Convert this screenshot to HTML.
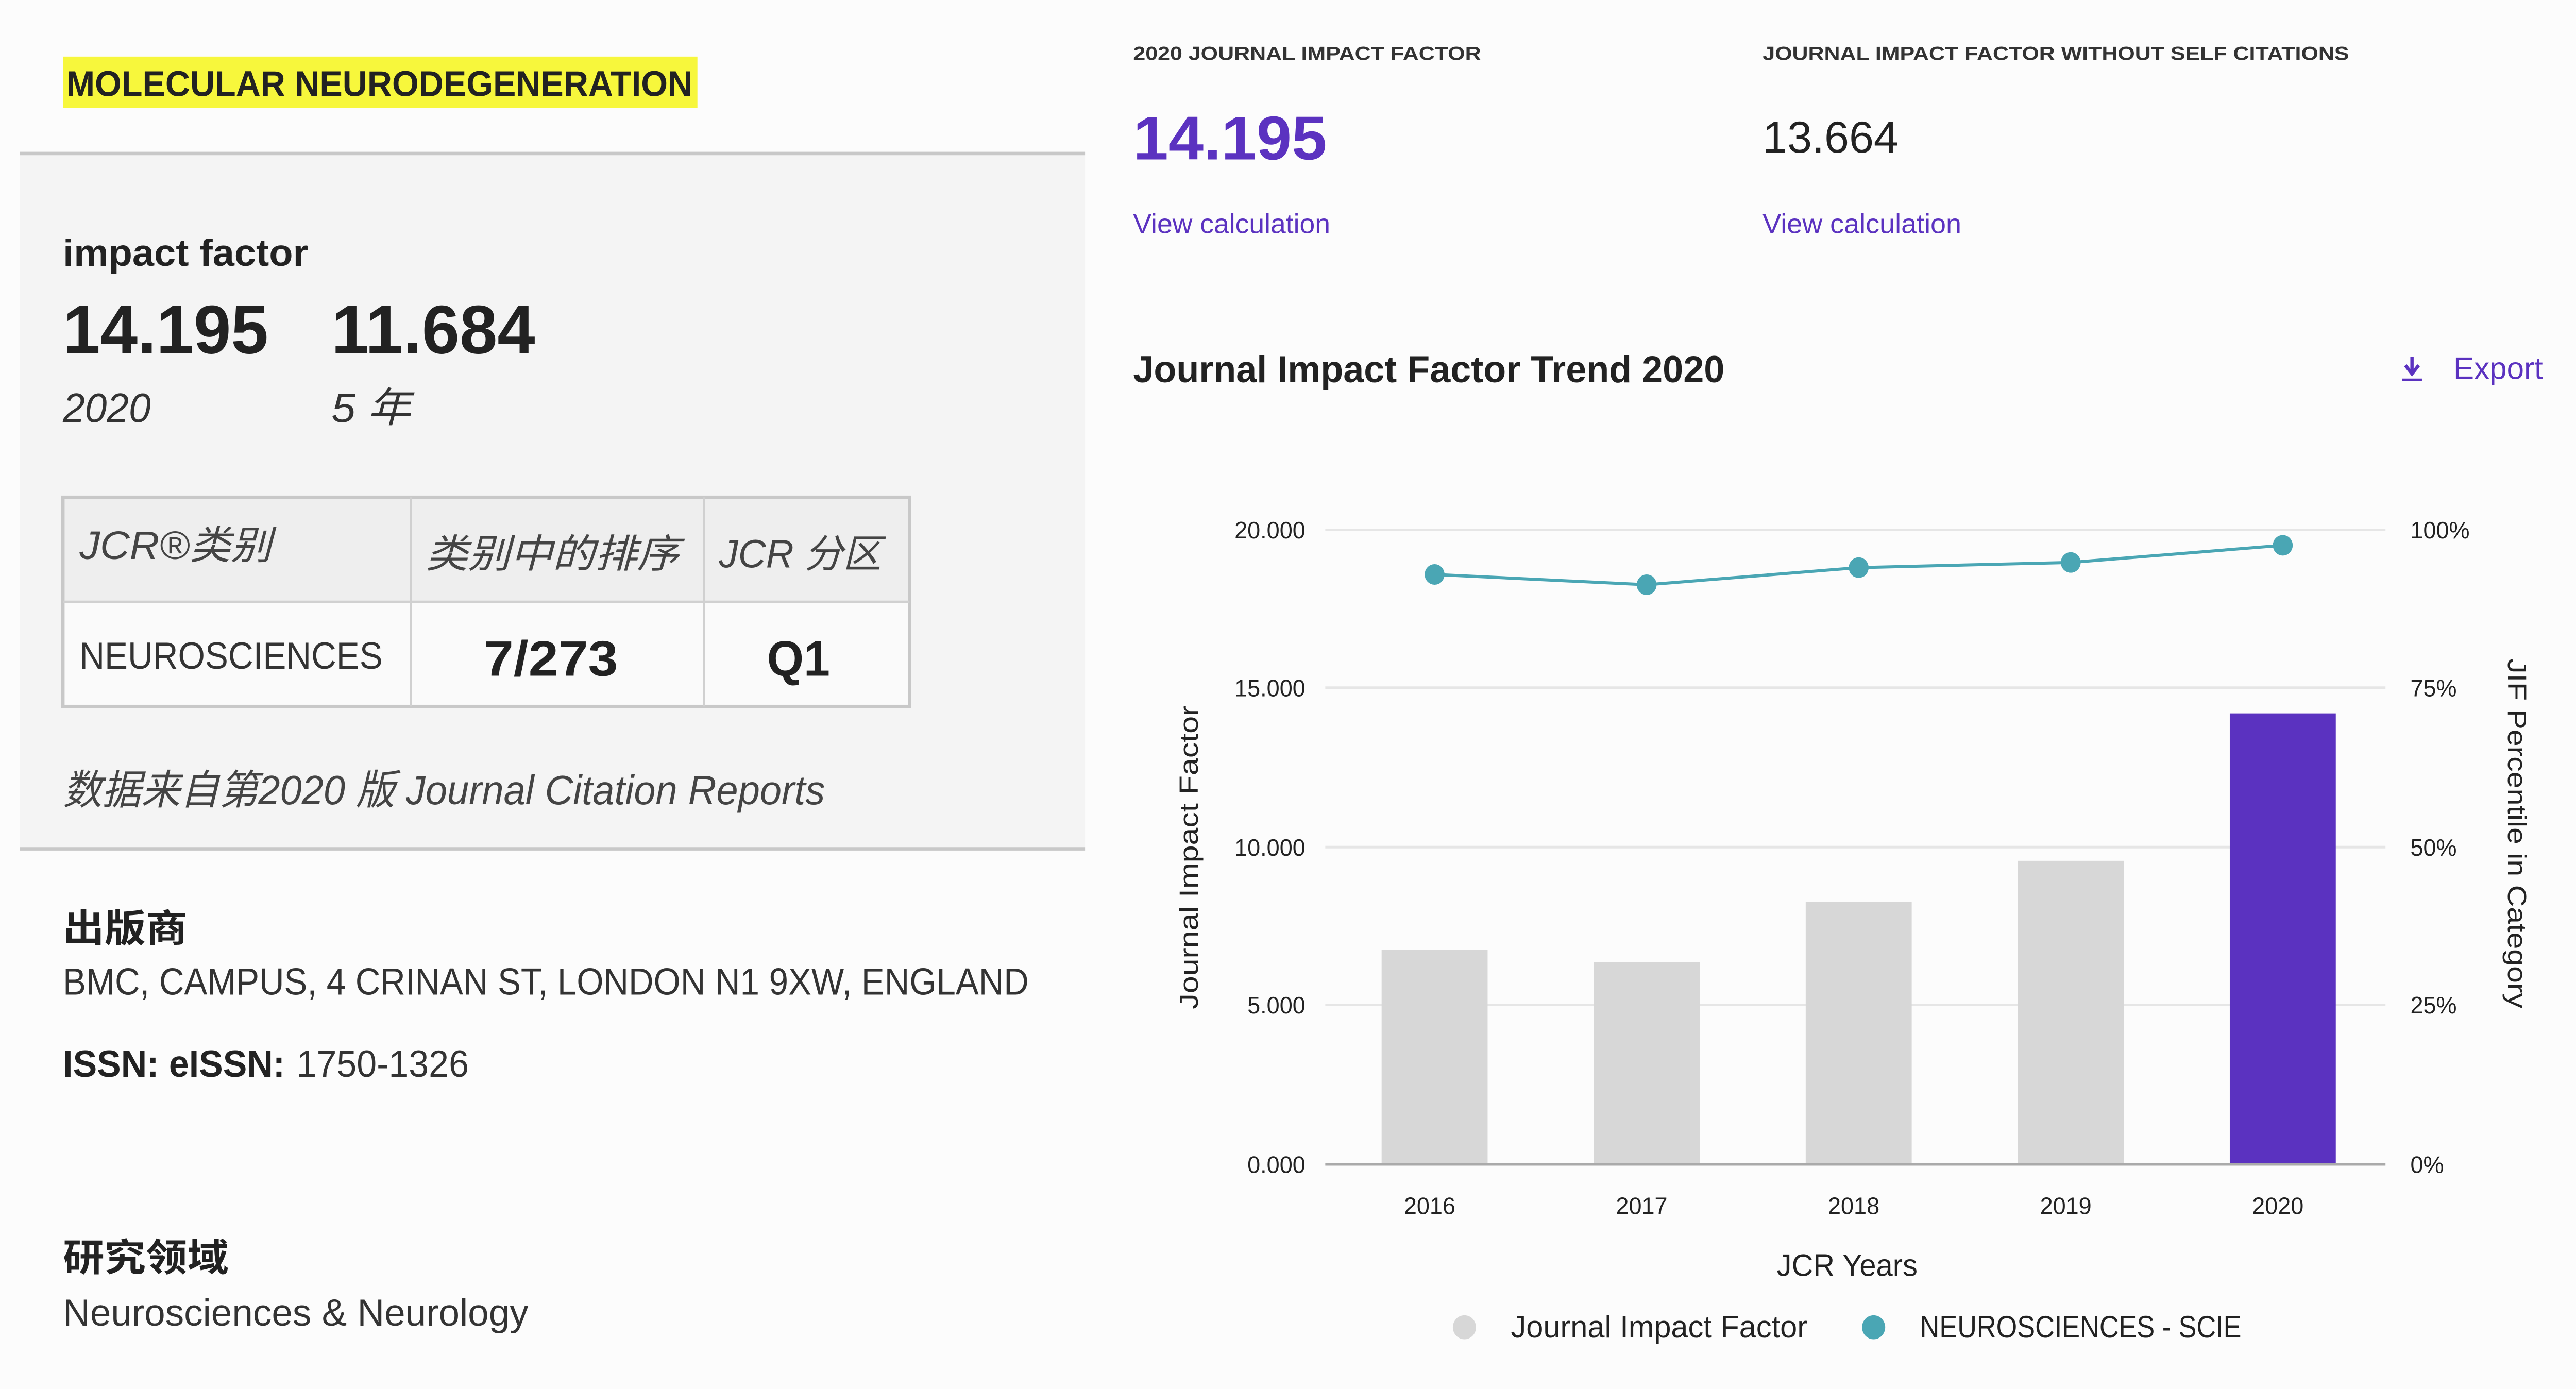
<!DOCTYPE html>
<html><head><meta charset="utf-8"><style>
html,body{margin:0;padding:0;background:#fcfcfc;overflow:hidden;width:100%;height:100%;}
svg{display:block;width:100vw;height:100vh;}
text{font-family:"Liberation Sans","Noto Sans CJK SC",sans-serif;}
</style></head><body>
<svg viewBox="0 0 1555 810" preserveAspectRatio="none" xmlns="http://www.w3.org/2000/svg">
<rect x="0" y="0" width="1555" height="810" fill="#fcfcfc"/>
<rect x="12" y="90" width="643" height="405" fill="#f4f4f4"/>
<line x1="12" y1="89.5" x2="655" y2="89.5" stroke="#c8c8c8" stroke-width="2"/>
<line x1="12" y1="495" x2="655" y2="495" stroke="#c8c8c8" stroke-width="2"/>
<rect x="38" y="33" width="383" height="30" fill="#f7f73c"/>
<text x="40" y="56" font-size="21" font-weight="600" fill="#222" textLength="378" lengthAdjust="spacingAndGlyphs">MOLECULAR NEURODEGENERATION</text>
<text x="38" y="155" font-size="22" font-weight="bold" fill="#222" textLength="148" lengthAdjust="spacingAndGlyphs">impact factor</text>
<text x="38" y="206" font-size="40" font-weight="bold" fill="#222" textLength="124" lengthAdjust="spacingAndGlyphs">14.195</text>
<text x="200" y="206" font-size="40" font-weight="bold" fill="#222" textLength="123" lengthAdjust="spacingAndGlyphs">11.684</text>
<text x="38" y="246" font-size="24" font-style="italic" fill="#333" textLength="53" lengthAdjust="spacingAndGlyphs">2020</text>
<text x="200" y="246" font-size="24" font-style="italic" fill="#333" textLength="48" lengthAdjust="spacingAndGlyphs">5 年</text>
<rect x="38" y="290" width="511" height="61" fill="#eeeeee"/>
<rect x="38" y="351" width="511" height="61" fill="#fafafa"/>
<rect x="38" y="290" width="511" height="122" fill="none" stroke="#c8c8c8" stroke-width="2"/>
<line x1="38" y1="351" x2="549" y2="351" stroke="#d0d0d0" stroke-width="1.5"/>
<line x1="248" y1="290" x2="248" y2="412" stroke="#d0d0d0" stroke-width="1.5"/>
<line x1="425" y1="290" x2="425" y2="412" stroke="#d0d0d0" stroke-width="1.5"/>
<text x="48" y="326" font-size="23" font-style="italic" fill="#444" textLength="116" lengthAdjust="spacingAndGlyphs">JCR®类别</text>
<text x="257" y="331" font-size="23" font-style="italic" fill="#444" textLength="153" lengthAdjust="spacingAndGlyphs">类别中的排序</text>
<text x="434" y="331" font-size="23" font-style="italic" fill="#444" textLength="98" lengthAdjust="spacingAndGlyphs">JCR 分区</text>
<text x="48" y="390" font-size="22" fill="#333" textLength="183" lengthAdjust="spacingAndGlyphs">NEUROSCIENCES</text>
<text x="292" y="394" font-size="29" font-weight="bold" fill="#222" textLength="81" lengthAdjust="spacingAndGlyphs">7/273</text>
<text x="463" y="394" font-size="29" font-weight="bold" fill="#222" textLength="38" lengthAdjust="spacingAndGlyphs">Q1</text>
<text x="38" y="469" font-size="24" font-style="italic" fill="#444" textLength="460" lengthAdjust="spacingAndGlyphs">数据来自第2020 版 Journal Citation Reports</text>
<text x="38" y="549" font-size="22" font-weight="bold" fill="#222" textLength="75" lengthAdjust="spacingAndGlyphs">出版商</text>
<text x="38" y="580" font-size="22" fill="#333" textLength="583" lengthAdjust="spacingAndGlyphs">BMC, CAMPUS, 4 CRINAN ST, LONDON N1 9XW, ENGLAND</text>
<text x="38" y="628" font-size="22" font-weight="bold" fill="#222" textLength="134" lengthAdjust="spacingAndGlyphs">ISSN: eISSN:</text>
<text x="179" y="628" font-size="22" fill="#333" textLength="104" lengthAdjust="spacingAndGlyphs">1750-1326</text>
<text x="38" y="741" font-size="22" font-weight="bold" fill="#222" textLength="100" lengthAdjust="spacingAndGlyphs">研究领域</text>
<text x="38" y="773" font-size="22" fill="#333" textLength="281" lengthAdjust="spacingAndGlyphs">Neurosciences &amp; Neurology</text>
<text x="684" y="35" font-size="11" font-weight="bold" fill="#333" textLength="210" lengthAdjust="spacingAndGlyphs">2020 JOURNAL IMPACT FACTOR</text>
<text x="1064" y="35" font-size="11" font-weight="bold" fill="#333" textLength="354" lengthAdjust="spacingAndGlyphs">JOURNAL IMPACT FACTOR WITHOUT SELF CITATIONS</text>
<text x="684" y="93" font-size="36" font-weight="bold" fill="#5b32c0" textLength="117" lengthAdjust="spacingAndGlyphs">14.195</text>
<text x="1064" y="89" font-size="26" fill="#222" textLength="82" lengthAdjust="spacingAndGlyphs">13.664</text>
<text x="684" y="136" font-size="16" fill="#5b32c0" textLength="119" lengthAdjust="spacingAndGlyphs">View calculation</text>
<text x="1064" y="136" font-size="16" fill="#5b32c0" textLength="120" lengthAdjust="spacingAndGlyphs">View calculation</text>
<text x="684" y="223" font-size="22" font-weight="bold" fill="#222" textLength="357" lengthAdjust="spacingAndGlyphs">Journal Impact Factor Trend 2020</text>
<path d="M1456 208 V217 M1452 213 L1456 218 L1460 213" stroke="#5b32c0" stroke-width="2" fill="none"/>
<line x1="1450" y1="221.5" x2="1462" y2="221.5" stroke="#5b32c0" stroke-width="1.5"/>
<text x="1481" y="221" font-size="18" fill="#5b32c0" textLength="54" lengthAdjust="spacingAndGlyphs">Export</text>
<g stroke="#e6e6e6" stroke-width="1.5">
<line x1="800" y1="309" x2="1440" y2="309"/>
<line x1="800" y1="401" x2="1440" y2="401"/>
<line x1="800" y1="494" x2="1440" y2="494"/>
<line x1="800" y1="586" x2="1440" y2="586"/>
</g>
<g fill="#d7d7d7">
<rect x="834" y="554" width="64" height="125"/>
<rect x="962" y="561" width="64" height="118"/>
<rect x="1090" y="526" width="64" height="153"/>
<rect x="1218" y="502" width="64" height="177"/>
</g>
<rect x="1346" y="416" width="64" height="263" fill="#5b32c0"/>
<line x1="800" y1="679" x2="1440" y2="679" stroke="#aaa" stroke-width="1.5"/>
<polyline points="866,335 994,341 1122,331 1250,328 1378,318" fill="none" stroke="#4aa6b4" stroke-width="1.8"/>
<g fill="#4aa6b4">
<circle cx="866" cy="335" r="6"/><circle cx="994" cy="341" r="6"/><circle cx="1122" cy="331" r="6"/><circle cx="1250" cy="328" r="6"/><circle cx="1378" cy="318" r="6"/>
</g>
<g font-size="14" fill="#222" text-anchor="end">
<text x="788" y="314">20.000</text><text x="788" y="406">15.000</text><text x="788" y="499">10.000</text><text x="788" y="591">5.000</text><text x="788" y="684">0.000</text>
</g>
<g font-size="14" fill="#222">
<text x="1455" y="314">100%</text><text x="1455" y="406">75%</text><text x="1455" y="499">50%</text><text x="1455" y="591">25%</text><text x="1455" y="684">0%</text>
</g>
<g font-size="14" fill="#222" text-anchor="middle">
<text x="863" y="708">2016</text><text x="991" y="708">2017</text><text x="1119" y="708">2018</text><text x="1247" y="708">2019</text><text x="1375" y="708">2020</text>
</g>
<text x="1115" y="744" font-size="18" fill="#222" text-anchor="middle">JCR Years</text>
<text transform="translate(723,500) rotate(-90)" font-size="16" fill="#222" text-anchor="middle" textLength="177" lengthAdjust="spacingAndGlyphs">Journal Impact Factor</text>
<text transform="translate(1514,486) rotate(90)" font-size="16" fill="#222" text-anchor="middle" textLength="204" lengthAdjust="spacingAndGlyphs">JIF Percentile in Category</text>
<circle cx="884" cy="774" r="7" fill="#d7d7d7"/>
<text x="912" y="780" font-size="18" fill="#222" textLength="179" lengthAdjust="spacingAndGlyphs">Journal Impact Factor</text>
<circle cx="1131" cy="774" r="7" fill="#4aa6b4"/>
<text x="1159" y="780" font-size="18" fill="#222" textLength="194" lengthAdjust="spacingAndGlyphs">NEUROSCIENCES - SCIE</text>
</svg>
</body></html>
